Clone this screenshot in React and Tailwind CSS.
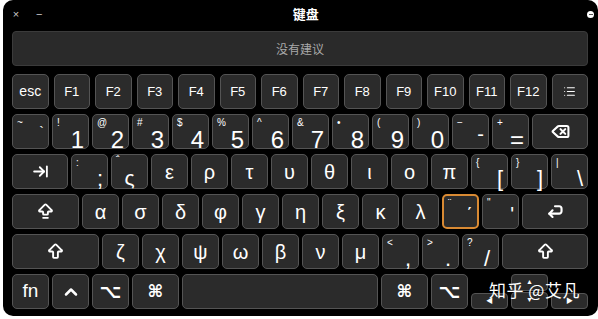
import { ArrowRightToLine, ArrowBigUp, ArrowBigUpDash, Delete, List, ChevronUp } from 'lucide-react';

const keyBase = "h-[35px] rounded-[5px] bg-[#2b2b2b] border border-[#545454] text-white";

function Key({ className = '', children }) {
	return (
		<div className={`${keyBase} flex items-center justify-center ${className}`}>
			{children}
		</div>
	);
}

// key with a small legend top-left and a big one lower-right
function Dual({ top, main, mainCls = 'text-[22px]', w = 'w-[37px]', hi }) {
	return (
		<div className={`h-[35px] rounded-[5px] bg-[#2b2b2b] text-white flex flex-col justify-between px-[4px] pt-[3px] pb-[3px] ${w} ${hi ? 'border-2 border-[#d98a33]' : 'border border-[#545454]'}`}>
			<span className="text-[10px] leading-none">{top}</span>
			<span className={`self-end leading-none ${mainCls}`}>{main}</span>
		</div>
	);
}

function Greek({ ch }) {
	return <Key className="w-[37px] text-[20px]">{ch}</Key>;
}

function ReturnIcon() {
	return (
		<svg width="20" height="18" viewBox="0 0 24 22" fill="none" stroke="white" strokeWidth="2.6" strokeLinecap="round" strokeLinejoin="round">
			<path d="M12 4h5a3 3 0 0 1 3 3v3a3 3 0 0 1-3 3H5" />
			<path d="M9 9l-4 4 4 4" />
		</svg>
	);
}

export default function App() {
	const fkeys = ['F1', 'F2', 'F3', 'F4', 'F5', 'F6', 'F7', 'F8', 'F9', 'F10', 'F11', 'F12'];
	const nums = [['~', '`', 'text-[14px] -translate-y-[6px]'], ['!', '1'], ['@', '2'], ['#', '3'], ['$', '4'], ['%', '5'], ['^', '6'], ['&', '7'], ['•', '8'], ['(', '9'], [')', '0'], ['−', '-', 'text-[20px] -translate-y-[4px]'], ['+', '=']];

	return (
		<div className="w-[598px] h-[319px] bg-white pl-[3px] font-['Liberation_Sans','Noto_Sans_CJK_SC',sans-serif]">
			<div className="relative w-[595px] h-[316px] bg-black rounded-[10px] pl-[9px] pr-[10px]">

				{/* title bar */}
				<div className="h-[31px] flex items-center pb-[3px]">
					<span className="text-[#c8c8c8] text-[11px] w-[14px] text-center ml-[-3px]">×</span>
					<span className="text-[#c8c8c8] text-[11px] ml-[13px]">−</span>
					<span className="flex-1 text-center text-white text-[13px] font-bold pr-[18px] font-['Noto_Sans_CJK_SC',sans-serif]">键盘</span>
					<span className="w-[7px] h-[7px] rounded-full bg-white flex items-center justify-center mr-[-6px]">
						<span className="w-[4px] h-[1px] bg-[#555]" />
					</span>
				</div>

				{/* suggestions */}
				<div className="h-[35px] rounded-[4px] bg-[#2a2a2a] border border-[#3b3b3b] flex items-center justify-center text-[12px] text-[#a9a9a9] font-['Noto_Sans_CJK_SC',sans-serif]">
					没有建议
				</div>

				<div className="flex flex-col gap-[5px] mt-[8px]">
					{/* function row */}
					<div className="flex gap-[5px]">
						<Key className="flex-1 text-[14px]">esc</Key>
						{fkeys.map(f => <Key key={f} className="flex-1 text-[13px]">{f}</Key>)}
						<Key className="flex-1 text-[#bbbbbb]"><List size={13} strokeWidth={2} /></Key>
					</div>

					{/* number row */}
					<div className="flex gap-[3px]">
						{nums.map(([t, m, c]) => <Dual key={m} top={t} main={m} mainCls={c || 'text-[24px] -mb-[1px]'} />)}
						<Key className="flex-1"><Delete size={19} strokeWidth={2.6} /></Key>
					</div>

					{/* tab row */}
					<div className="flex gap-[3px]">
						<Key className="flex-1"><ArrowRightToLine size={17} strokeWidth={2.6} /></Key>
						<Dual top=":" main=";" mainCls="text-[22px]" />
						<Key className="w-[37px] flex-col !justify-start items-stretch px-[4px] pt-[1px]">
							<span className="text-[10px] leading-none">΅</span>
							<span className="text-[21px] leading-none text-center mt-[1px]">ς</span>
						</Key>
						{['ε', 'ρ', 'τ', 'υ', 'θ', 'ι', 'ο', 'π'].map(c => <Greek key={c} ch={c} />)}
						<Dual top="{" main="[" mainCls="text-[22px]" />
						<Dual top="}" main="]" mainCls="text-[22px]" />
						<Dual top="|" main="\" mainCls="text-[22px]" />
					</div>

					{/* caps row */}
					<div className="flex gap-[3px]">
						<Key className="w-[67px]"><ArrowBigUpDash size={19} strokeWidth={2.4} /></Key>
						{['α', 'σ', 'δ', 'φ', 'γ', 'η', 'ξ', 'κ', 'λ'].map(c => <Greek key={c} ch={c} />)}
						<Dual top="¨" main="΄" mainCls="text-[20px] -translate-y-[4px]" hi />
						<Dual top={'"'} main="'" mainCls="text-[20px] -translate-y-[4px]" />
						<Key className="flex-1"><ReturnIcon /></Key>
					</div>

					{/* shift row */}
					<div className="flex gap-[3px]">
						<Key className="w-[87px]"><ArrowBigUp size={19} strokeWidth={2.4} /></Key>
						{['ζ', 'χ', 'ψ', 'ω', 'β', 'ν', 'μ'].map(c => <Greek key={c} ch={c} />)}
						<Dual top="<" main="," mainCls="text-[22px] -translate-x-[3px]" />
						<Dual top=">" main="." mainCls="text-[22px] -translate-x-[3px]" />
						<Dual top="?" main="/" mainCls="text-[22px] -translate-x-[4px]" />
						<Key className="flex-1"><ArrowBigUp size={19} strokeWidth={2.4} /></Key>
					</div>

					{/* bottom row */}
					<div className="flex gap-[3px] h-[35px]">
						<Key className="w-[37px] text-[19px]">fn</Key>
						<Key className="w-[37px]"><ChevronUp size={20} strokeWidth={3} /></Key>
						<Key className="w-[37px] text-[19px] font-bold font-['DejaVu_Sans',sans-serif]">⌥</Key>
						<Key className="w-[47px] text-[17px] font-bold font-['DejaVu_Sans',sans-serif]">⌘</Key>
						<Key className="w-[196px]" />
						<Key className="w-[47px] text-[17px] font-bold font-['DejaVu_Sans',sans-serif]">⌘</Key>
						<Key className="w-[37px] text-[19px] font-bold font-['DejaVu_Sans',sans-serif]">⌥</Key>
						<div className="w-[37px] flex flex-col justify-end">
							<div className="h-[16px] rounded-[4px] bg-[#2b2b2b] border border-[#545454] text-white text-[7px] flex items-center justify-center">◀</div>
						</div>
						<div className="w-[37px] flex flex-col gap-[1px]">
							<div className="h-[17px] rounded-[4px] bg-[#2b2b2b] border border-[#545454] text-white text-[7px] flex items-center justify-center">▲</div>
							<div className="h-[17px] rounded-[4px] bg-[#2b2b2b] border border-[#545454] text-white text-[7px] flex items-center justify-center">▼</div>
						</div>
						<div className="flex-1 flex flex-col justify-end">
							<div className="h-[16px] rounded-[4px] bg-[#2b2b2b] border border-[#545454] text-white text-[7px] flex items-center justify-center">▶</div>
						</div>
					</div>
				</div>

				{/* watermark */}
				<div className="absolute left-[486px] top-[281px] text-white text-[17px] leading-none tracking-[0.5px] font-['Noto_Sans_CJK_SC',sans-serif]">
					知乎 @艾凡
				</div>
			</div>
		</div>
	);
}
